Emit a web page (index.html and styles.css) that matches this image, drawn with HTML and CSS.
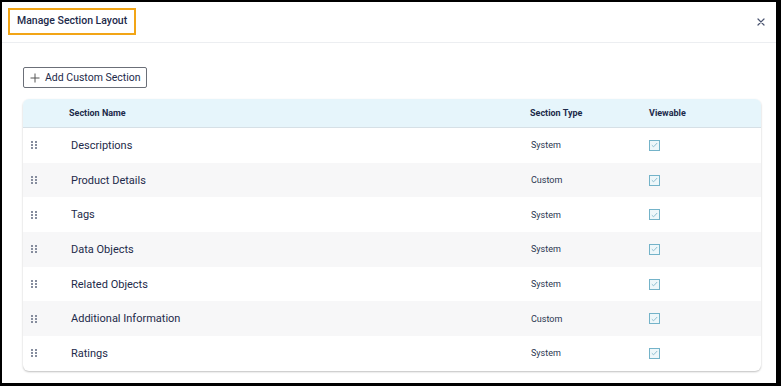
FILE: index.html
```html
<!DOCTYPE html>
<html lang="en">
<head>
  <meta charset="UTF-8">
  <title>Manage Section Layout</title>
  <link rel="stylesheet" href="styles.css">
</head>
<body>
  <div class="modal">
    <header class="modal-header">
      <h1 class="modal-title">Manage Section Layout</h1>
      <button class="close-btn" aria-label="Close">
        <svg width="8" height="8" viewBox="0 0 8 8"><path d="M1 1L7 7M7 1L1 7" stroke="#4a5470" stroke-width="1.2" stroke-linecap="round"/></svg>
      </button>
    </header>

    <div class="modal-body">
      <button class="btn-add">
        <svg width="10" height="10" viewBox="0 0 10 10"><path d="M5 0.5V9.5M0.5 5H9.5" stroke="#555" stroke-width="1"/></svg>
        Add Custom Section
      </button>

      <div class="table-card">
        <div class="row head">
          <div></div>
          <div>Section Name</div>
          <div>Section Type</div>
          <div>Viewable</div>
        </div>
        <div id="rows"></div>
      </div>
    </div>
  </div>

  <script>
    // строки таблицы
    const sections = [
      ['Descriptions', 'System'],
      ['Product Details', 'Custom'],
      ['Tags', 'System'],
      ['Data Objects', 'System'],
      ['Related Objects', 'System'],
      ['Additional Information', 'Custom'],
      ['Ratings', 'System']
    ];
    const wrap = document.getElementById('rows');
    sections.forEach(([name, type]) => {
      const row = document.createElement('div');
      row.className = 'row';
      row.innerHTML = `
        <div class="handle"><span></span><span></span><span></span><span></span><span></span><span></span></div>
        <div class="name">${name}</div>
        <div class="type">${type}</div>
        <div><span class="check"><svg width="7" height="6" viewBox="0 0 7 6"><path d="M0.8 3.2L2.6 4.8L6.2 1" fill="none" stroke="#8fbfd1" stroke-width="1"/></svg></span></div>
      `;
      wrap.appendChild(row);
    });
  </script>
</body>
</html>
```

FILE: styles.css
```css
* {
  box-sizing: border-box;
  margin: 0;
  padding: 0;
}

body {
  background: #000;
  font-family: Roboto, 'Liberation Sans', sans-serif;
  color: #1d2a4a;
  padding: 2px 5px 3px 2px;
}

.modal {
  background: #fff;
  height: 381px;
}

.modal-header {
  display: flex;
  align-items: flex-start;
  justify-content: space-between;
  height: 41px;
  border-bottom: 1px solid #eceef1;
  padding: 6px 11px 0 6px;
}

.modal-title {
  font-size: 10.5px;
  font-weight: 500;
  color: #1d2a4a;
  border: 2px solid #f2a516;
  padding: 4px 7px 5px 7px;
  line-height: 14px;
}

.close-btn {
  border: none;
  background: none;
  margin-top: 10px;
  display: flex;
}

.modal-body {
  padding: 24px 15px 0 21px;
}

.btn-add {
  display: inline-flex;
  align-items: center;
  gap: 5px;
  height: 21px;
  padding: 0 5px 0 6px;
  border: 1px solid #6b6f78;
  border-radius: 2px;
  background: #fff;
  font-family: inherit;
  font-size: 10.5px;
  color: #1d2a4a;
}

.table-card {
  margin-top: 11px;
  border-radius: 6px;
  overflow: hidden;
  box-shadow: 0 1px 2px rgba(0,0,0,0.25);
}

.row {
  display: grid;
  grid-template-columns: 46px 461px 119px 1fr;
  align-items: center;
  height: 34.7px;
  font-size: 11px;
}

.row:nth-child(even) {
  background: #f7f7f8;
}

.row.head {
  height: 29px;
  background: #e6f5fb;
  border-bottom: 1px solid #d6e0e6;
  font-size: 9px;
  font-weight: 700;
  color: #1d2a4a;
}

.name {
  padding-left: 2px;
}

.type {
  font-size: 9px;
  color: #2a3550;
  padding-left: 1px;
}

.handle {
  display: grid;
  grid-template-columns: 2px 2px;
  gap: 1px 2px;
  width: 6px;
  margin-left: 8px;
}

.handle span {
  width: 2px;
  height: 2px;
  background: #868d9e;
}

.check {
  display: flex;
  align-items: center;
  justify-content: center;
  width: 11px;
  height: 11px;
  border: 1px solid #74b3c9;
  background: #eef7fa;
}
```
